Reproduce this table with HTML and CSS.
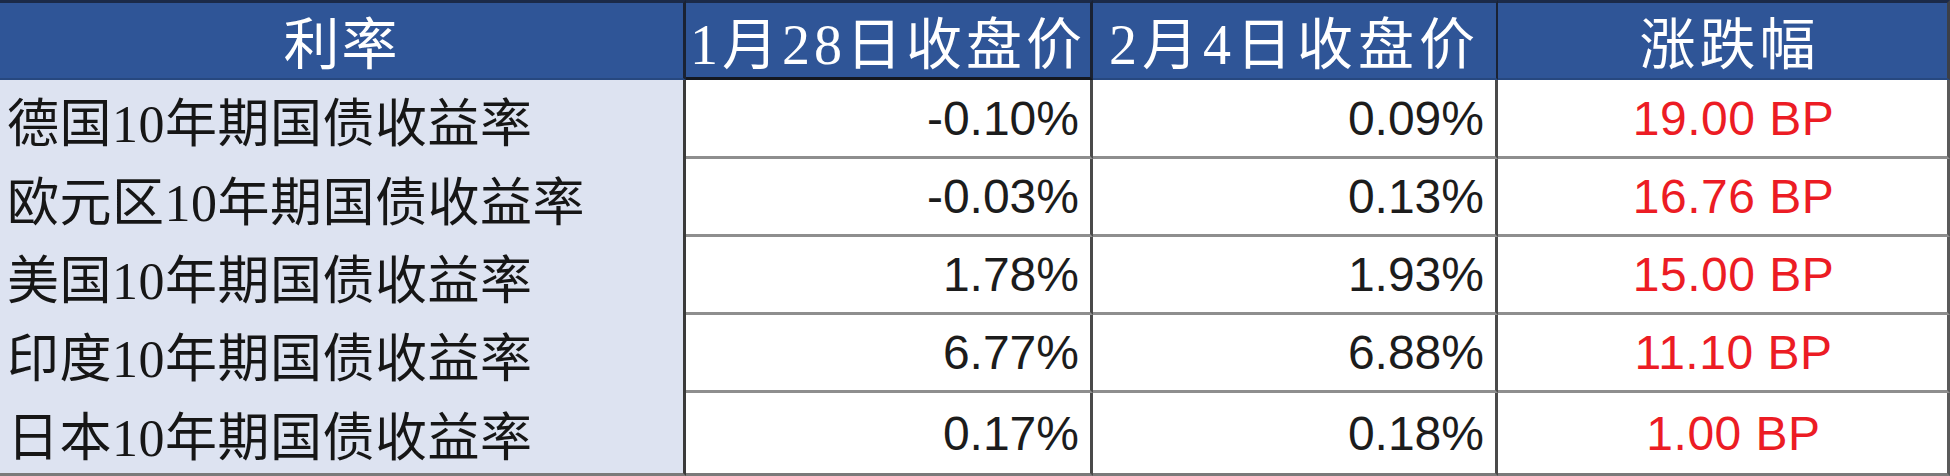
FILE: index.html
```html
<!DOCTYPE html>
<html lang="zh-CN">
<head>
<meta charset="utf-8">
<title>国债收益率</title>
<link rel="stylesheet" href="styles.css">
</head>
<body>
<div class="table">
  <div class="hd hd-name">利率</div>
  <div class="hd hd-d1">1月28日收盘价</div>
  <div class="hd hd-d2">2月4日收盘价</div>
  <div class="hd hd-chg">涨跌幅</div>

  <div class="name">德国10年期国债收益率</div>
  <div class="num">-0.10%</div>
  <div class="num">0.09%</div>
  <div class="chg">19.00 BP</div>

  <div class="name">欧元区10年期国债收益率</div>
  <div class="num">-0.03%</div>
  <div class="num">0.13%</div>
  <div class="chg">16.76 BP</div>

  <div class="name">美国10年期国债收益率</div>
  <div class="num">1.78%</div>
  <div class="num">1.93%</div>
  <div class="chg">15.00 BP</div>

  <div class="name">印度10年期国债收益率</div>
  <div class="num">6.77%</div>
  <div class="num">6.88%</div>
  <div class="chg">11.10 BP</div>

  <div class="name last">日本10年期国债收益率</div>
  <div class="num last">0.17%</div>
  <div class="num last">0.18%</div>
  <div class="chg last">1.00 BP</div>
</div>
</body>
</html>
```
FILE: styles.css
```css
* { box-sizing: border-box; }
html, body { margin: 0; padding: 0; background: #ffffff; }

.table {
  width: 1950px;
  display: grid;
  grid-template-columns: 686px 407px 405px 452px;
  grid-template-rows: 80px 79px 78px 78px 78px 83px;
}

.hd {
  background: #2f5597;
  color: #ffffff;
  font-family: "Liberation Serif", "Noto Sans CJK SC", serif;
  font-size: 56px;
  font-weight: 400;
  letter-spacing: 4px;
  display: flex;
  align-items: center;
  justify-content: center;
  border-top: 3px solid #1b2a48;
  border-bottom: 2px solid #27487f;
  border-right: 3px solid #1a2233;
  padding-bottom: 2px;
}
.hd-name { letter-spacing: 2px; }
.hd-d1 { border-bottom: 3px solid #141820; }
.hd-d2 { border-right: 2px solid #1a2233; letter-spacing: 5px; }
.hd-chg { border-right: 3px solid #3c3f46; padding-left: 14px; }

.name {
  background: #dde3f1;
  color: #161616;
  font-family: "Liberation Serif", "Noto Sans CJK SC", serif;
  font-size: 52px;
  letter-spacing: 0.5px;
  display: flex;
  align-items: center;
  padding-left: 7px;
  border-right: 3px solid #3a3a3a;
  white-space: nowrap;
}
.name.last { border-bottom: 3px solid #7a7a7a; }

.num, .chg {
  background: #ffffff;
  font-family: "Liberation Sans", Arial, sans-serif;
  font-size: 48px;
  display: flex;
  align-items: center;
  border-right: 3px solid #4a4a4a;
  border-bottom: 3px solid #8e8e8e;
}
.num {
  color: #1c1c1c;
  justify-content: flex-end;
  padding-right: 11px;
}
.chg {
  color: #ec1c24;
  justify-content: center;
  padding-left: 22px;
  letter-spacing: 0.5px;
  border-right: 3px solid #5a5a5a;
}
.num.last, .chg.last { border-bottom: 3px solid #7a7a7a; }
```
